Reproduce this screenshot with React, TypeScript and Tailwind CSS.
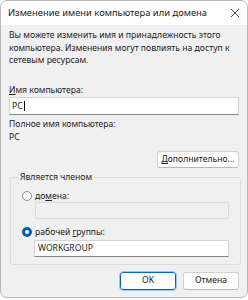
import React from 'react';

const font = { fontFamily: '"Noto Sans", "Open Sans", sans-serif' };

function Radio({ checked }: { checked?: boolean }) {
  return checked ? (
    <span className="flex h-[10px] w-[10px] items-center justify-center rounded-full bg-[#005fb8]">
      <span className="h-[4px] w-[4px] rounded-full bg-white" />
    </span>
  ) : (
    <span className="h-[10px] w-[10px] rounded-full border border-[#8a8a8a] bg-[#f7f7f7]" />
  );
}

export default function App() {
  return (
    <div className="h-[300px] w-[248px] bg-white text-[8.6px] leading-[12.5px] text-[#1b1b1b]" style={font}>
      <div className="flex h-[298px] flex-col overflow-hidden rounded-[7px] border border-[#b8b8b8] bg-[#f0f0f0]">
        {/* title bar */}
        <div className="flex h-[24px] shrink-0 items-center justify-between bg-white pl-[7px] pr-[6px]">
          <span className="text-[9.4px]">Изменение имени компьютера или домена</span>
          <svg width="10" height="10" viewBox="0 0 10 10" className="mr-[1px]">
            <path d="M1 1 L9 9 M9 1 L1 9" stroke="#333" strokeWidth="0.9" />
          </svg>
        </div>

        <div className="flex flex-1 flex-col px-[8px] pt-[4px]">
          <p>
            Вы можете изменить имя и принадлежность этого компьютера. Изменения могут повлиять на доступ к сетевым ресурсам.
          </p>

          <div className="mt-[17px]">
            <span className="underline">И</span>мя компьютера:
          </div>
          <div className="mt-[1px] flex h-[18px] items-center border border-[#d4d4d4] border-b-[#868686] bg-white pl-[2px]">
            PC<span className="ml-px h-[10px] w-px bg-black" />
          </div>

          <div className="mt-[3px]">Полное имя компьютера:</div>
          <div>PC</div>

          <div className="mt-[8px] flex justify-end">
            <button className="h-[17px] w-[82px] rounded-[3px] border border-[#d0d0d0] border-b-[#b8b8b8] bg-[#fdfdfd]">
              <span className="underline">Д</span>ополнительно...
            </button>
          </div>

          <fieldset className="mt-[3px] ml-px mr-[-2px] rounded-[3px] border border-[#dcdcdc] px-[11px] pb-[7px]">
            <legend className="ml-[-3px] px-[1px]">Является членом</legend>
            <label className="mt-[6px] flex items-center gap-[3px]">
              <Radio />
              <span>
                до<span className="underline">м</span>ена:
              </span>
            </label>
            <div className="ml-[13px] h-[17px] border border-[#dcdcdc] bg-[#f0f0f0]" />
            <label className="mt-[7px] flex items-center gap-[3px]">
              <Radio checked />
              <span>
                рабочей <span className="underline">г</span>руппы:
              </span>
            </label>
            <div className="mt-px ml-[12px] flex h-[17px] items-center border border-[#d4d4d4] border-b-[#868686] bg-white pl-[3px]">
              WORKGROUP
            </div>
          </fieldset>

          <div className="mt-[7px] flex justify-end gap-[7px]">
            <button className="h-[18px] w-[56px] rounded-[3px] border border-[#0067c0] bg-[#fdfdfd] outline outline-1 outline-[#9fc3e6]">
              OK
            </button>
            <button className="h-[18px] w-[56px] rounded-[3px] border border-[#d0d0d0] border-b-[#b8b8b8] bg-[#fdfdfd]">
              Отмена
            </button>
          </div>
        </div>
      </div>
    </div>
  );
}
